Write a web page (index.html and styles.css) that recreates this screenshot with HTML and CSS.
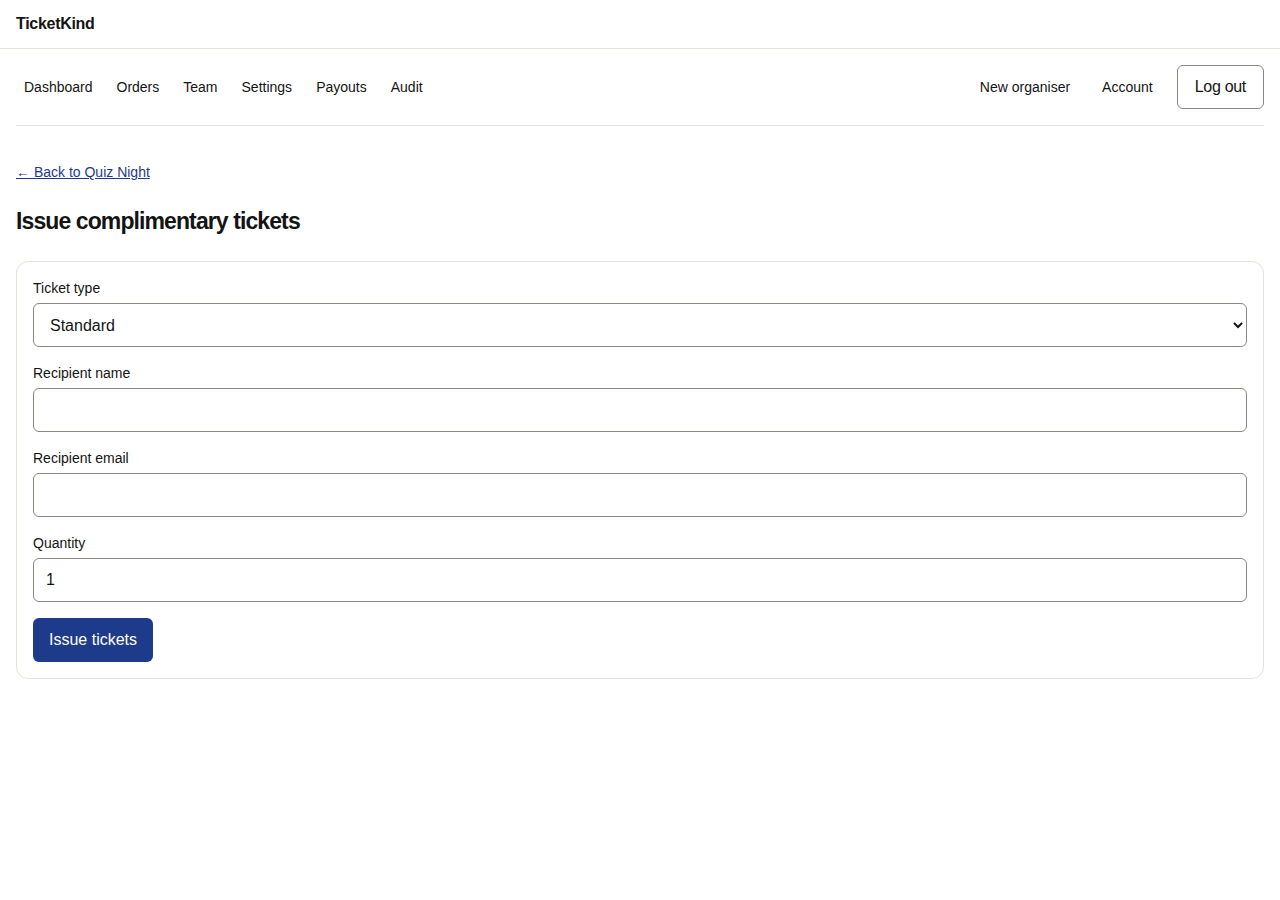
FILE: index.html
```html
<!DOCTYPE html>
<html>
<head>
    <title>Issue complimentary tickets - TicketKind</title>
    <link rel="stylesheet" href="styles.css">
</head>
<body>
    <header class="site-header">
        <a class="brand" href="#">TicketKind</a>
    </header>

    <div class="page">
        <nav class="main-nav">
            <div class="nav-left">
                <a class="nav-link" href="#">Dashboard</a>
                <a class="nav-link" href="#">Orders</a>
                <a class="nav-link" href="#">Team</a>
                <a class="nav-link" href="#">Settings</a>
                <a class="nav-link" href="#">Payouts</a>
                <a class="nav-link" href="#">Audit</a>
            </div>
            <div class="nav-right">
                <a class="nav-link" href="#">New organiser</a>
                <a class="nav-link" href="#">Account</a>
                <button class="btn-outline" type="button">Log out</button>
            </div>
        </nav>

        <main class="content">
            <a class="back-link" href="#">&larr; Back to Quiz Night</a>

            <h1 class="page-title">Issue complimentary tickets</h1>

            <form class="card">
                <div class="field">
                    <label for="ticketType">Ticket type</label>
                    <select id="ticketType">
                        <option>Standard</option>
                    </select>
                </div>
                <div class="field">
                    <label for="recipientName">Recipient name</label>
                    <input type="text" id="recipientName">
                </div>
                <div class="field">
                    <label for="recipientEmail">Recipient email</label>
                    <input type="email" id="recipientEmail">
                </div>
                <div class="field">
                    <label for="quantity">Quantity</label>
                    <input type="number" id="quantity" value="1" min="1">
                </div>
                <div class="actions">
                    <button class="btn-primary" type="submit">Issue tickets</button>
                </div>
            </form>
        </main>
    </div>
</body>
</html>
```

FILE: styles.css
```css
* {
    box-sizing: border-box;
}

body {
    margin: 0;
    font-family: "Liberation Sans", Arial, sans-serif;
    color: #141414;
    background: #fff;
}

a {
    color: inherit;
    text-decoration: none;
}

.site-header {
    height: 49px;
    padding: 0 16px;
    display: flex;
    align-items: center;
    border-bottom: 1px solid #e6e2da;
}

.brand {
    font-size: 16px;
    font-weight: bold;
    letter-spacing: -0.3px;
}

.page {
    padding: 0 16px;
}

.main-nav {
    display: flex;
    justify-content: space-between;
    align-items: center;
    padding: 16px 0;
    border-bottom: 1px solid #e6e2da;
}

.nav-left {
    display: flex;
    gap: 8px;
}

.nav-right {
    display: flex;
    align-items: center;
    gap: 16px;
}

.nav-link {
    padding: 6px 8px;
    font-size: 14px;
}

.btn-outline {
    height: 44px;
    padding: 0 17px;
    background: #fff;
    border: 1px solid #8b877f;
    border-radius: 6px;
    font-family: inherit;
    font-size: 16px;
    color: #141414;
    letter-spacing: -0.3px;
    cursor: pointer;
}

.content {
    padding-top: 36px;
}

.back-link {
    display: inline-block;
    font-size: 14px;
    color: #1e3a8a;
    text-decoration: underline;
    line-height: 20px;
}

.page-title {
    margin: 23px 0 24px;
    font-size: 23px;
    line-height: 32px;
    letter-spacing: -0.9px;
    font-weight: bold;
}

.card {
    display: flex;
    flex-direction: column;
    gap: 16px;
    padding: 16px;
    border: 1px solid #e6e2da;
    border-radius: 12px;
}

.field {
    display: flex;
    flex-direction: column;
    gap: 4px;
}

.field label {
    font-size: 14px;
    line-height: 21px;
}

.field input,
.field select {
    height: 44px;
    width: 100%;
    padding: 0 12px;
    border: 1px solid #8b877f;
    border-radius: 6px;
    background: #fff;
    font-family: inherit;
    font-size: 16px;
    color: #141414;
}

.actions {
    display: flex;
}

.btn-primary {
    height: 44px;
    padding: 0 16px;
    border: none;
    border-radius: 6px;
    background: #1e3a8a;
    color: #fff;
    font-family: inherit;
    font-size: 16px;
    cursor: pointer;
}
```
